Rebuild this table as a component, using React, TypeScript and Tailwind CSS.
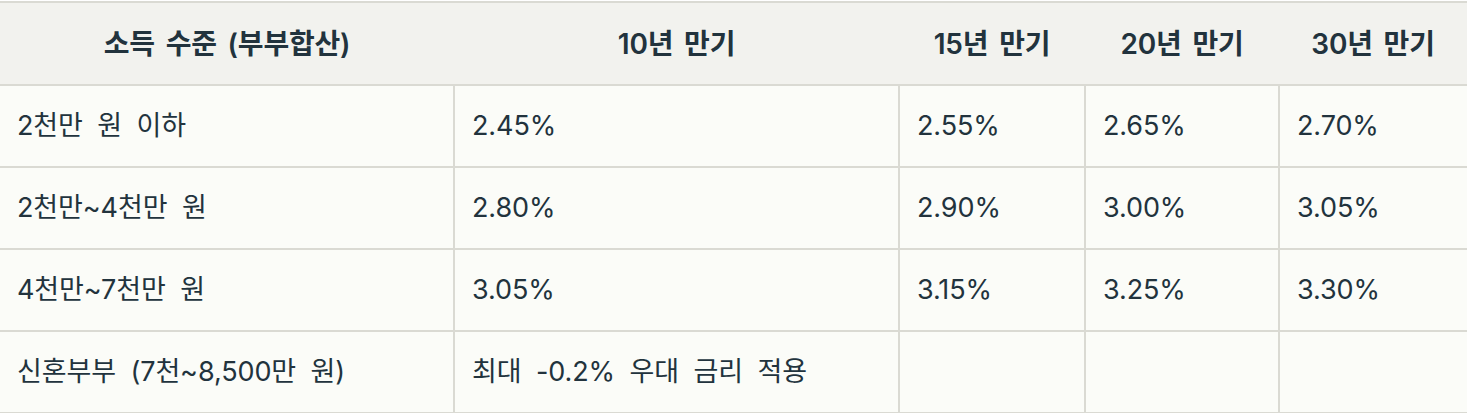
const headers = ['소득 수준 (부부합산)', '10년 만기', '15년 만기', '20년 만기', '30년 만기'];

const rows = [
  ['2천만 원 이하', '2.45%', '2.55%', '2.65%', '2.70%'],
  ['2천만~4천만 원', '2.80%', '2.90%', '3.00%', '3.05%'],
  ['4천만~7천만 원', '3.05%', '3.15%', '3.25%', '3.30%'],
  ['신혼부부 (7천~8,500만 원)', '최대 -0.2% 우대 금리 적용', '', '', ''],
];

const App = () => {
  return (
    <div className="w-[1467px] h-[413px] pt-px bg-white text-[#22333d]"
         style={{ fontFamily: 'Inter, "Noto Sans CJK KR", sans-serif' }}>
      <table className="w-full table-fixed border-collapse">
        <colgroup>
          <col className="w-[454px]" />
          <col className="w-[445px]" />
          <col className="w-[186px]" />
          <col className="w-[194px]" />
          <col />
        </colgroup>
        <thead>
          <tr className="h-[83px] bg-[#f2f2ee] border-y-2 border-[#dadad3]">
            {headers.map((h) => (
              <th key={h} className="text-center text-[28px] font-semibold align-middle px-1 tracking-[-0.2px] [word-spacing:4px]">
                {h}
              </th>
            ))}
          </tr>
        </thead>
        <tbody className="bg-[#fbfcf8]">
          {rows.map((r, i) => (
            <tr key={i} className="h-[82px] border-b-2 border-[#dadad3]">
              {r.map((c, j) => (
                <td key={j}
                    className="text-left text-[27px] font-normal align-middle pl-[17px] tracking-[-0.1px] [word-spacing:7px] border-r-2 border-[#dadad3] last:border-r-0">
                  {c}
                </td>
              ))}
            </tr>
          ))}
        </tbody>
      </table>
    </div>
  );
};

export default App;
